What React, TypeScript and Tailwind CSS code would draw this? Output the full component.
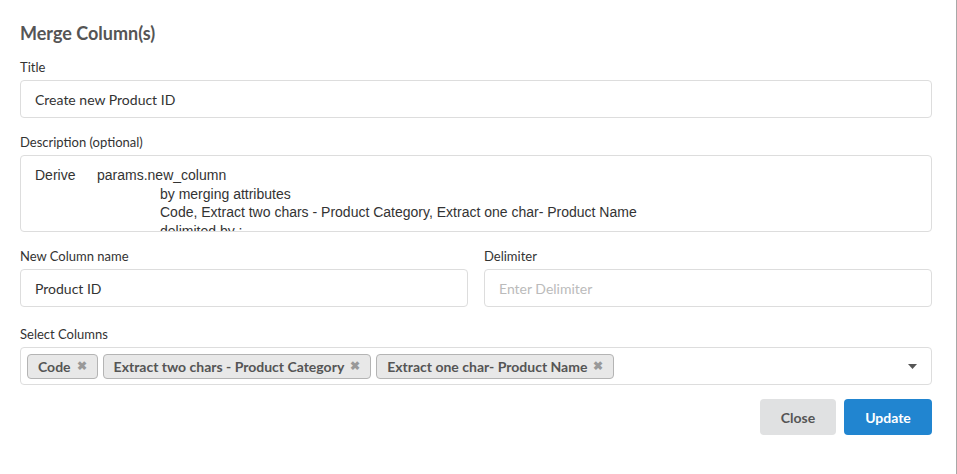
const tags = ["Code", "Extract two chars - Product Category", "Extract one char- Product Name"];

function Label({ children }: { children: React.ReactNode }) {
  return <div className="text-[13px] leading-4 text-[#333] mb-[5px]">{children}</div>;
}

export default function App() {
  return (
    <div
      className="w-[957px] h-[474px] bg-white border-r border-[#a8a8a8] overflow-hidden"
      style={{ fontFamily: "Lato, 'Noto Sans', sans-serif" }}
    >
      <div className="pl-5 pr-6 pt-[21px]">
        <h2 className="text-[18px] leading-6 font-bold text-[#555] mb-[14px]">Merge Column(s)</h2>

        <Label>Title</Label>
        <div className="h-[38px] border border-[#ddd] rounded px-[14px] flex items-center text-[14px] text-[#333]">
          Create new Product ID
        </div>

        <div className="mt-4">
          <Label>Description (optional)</Label>
          <div
            className="h-[77px] border border-[#ddd] rounded pl-[14px] pt-[10px] overflow-hidden text-[14px] leading-[18.5px] text-[#333]"
            style={{ fontFamily: "'Liberation Sans', Arial, sans-serif" }}
          >
            <div className="flex">
              <span className="w-[62px]">Derive</span>
              <span>params.new_column</span>
            </div>
            <div className="pl-[125px]">by merging attributes</div>
            <div className="pl-[125px]">Code, Extract two chars - Product Category, Extract one char- Product Name</div>
            <div className="pl-[125px]">delimited by :</div>
          </div>
        </div>

        <div className="mt-4 grid grid-cols-2 gap-4">
          <div>
            <Label>New Column name</Label>
            <div className="h-[38px] border border-[#ddd] rounded px-[14px] flex items-center text-[14px] text-[#333]">
              Product ID
            </div>
          </div>
          <div>
            <Label>Delimiter</Label>
            <div className="h-[38px] border border-[#ddd] rounded px-[14px] flex items-center text-[14px] text-[#bbb]">
              Enter Delimiter
            </div>
          </div>
        </div>

        <div className="mt-[19px]">
          <Label>Select Columns</Label>
          <div className="h-[38px] border border-[#ddd] rounded pl-[6px] pr-[12px] flex items-center">
            <div className="flex gap-[5px] flex-1">
              {tags.map((t) => (
                <span
                  key={t}
                  className="h-[25px] px-[10px] flex items-center gap-[6px] bg-[#e8e8e8] border border-[#b4b4b4] rounded text-[14px] font-bold text-[#555]"
                >
                  {t}
                  <span className="text-[12px] text-[#999]">✖</span>
                </span>
              ))}
            </div>
            <svg width="9" height="5" viewBox="0 0 9 5" className="mr-[2px]">
              <path d="M0 0 L9 0 L4.5 5 Z" fill="#555" />
            </svg>
          </div>
        </div>

        <div className="mt-[14px] flex justify-end gap-2">
          <button className="h-[36px] w-[76px] rounded bg-[#e0e1e2] text-[14px] font-bold text-[#555]">Close</button>
          <button className="h-[36px] w-[88px] rounded bg-[#2185d0] text-[14px] font-bold text-white">Update</button>
        </div>
      </div>
    </div>
  );
}
